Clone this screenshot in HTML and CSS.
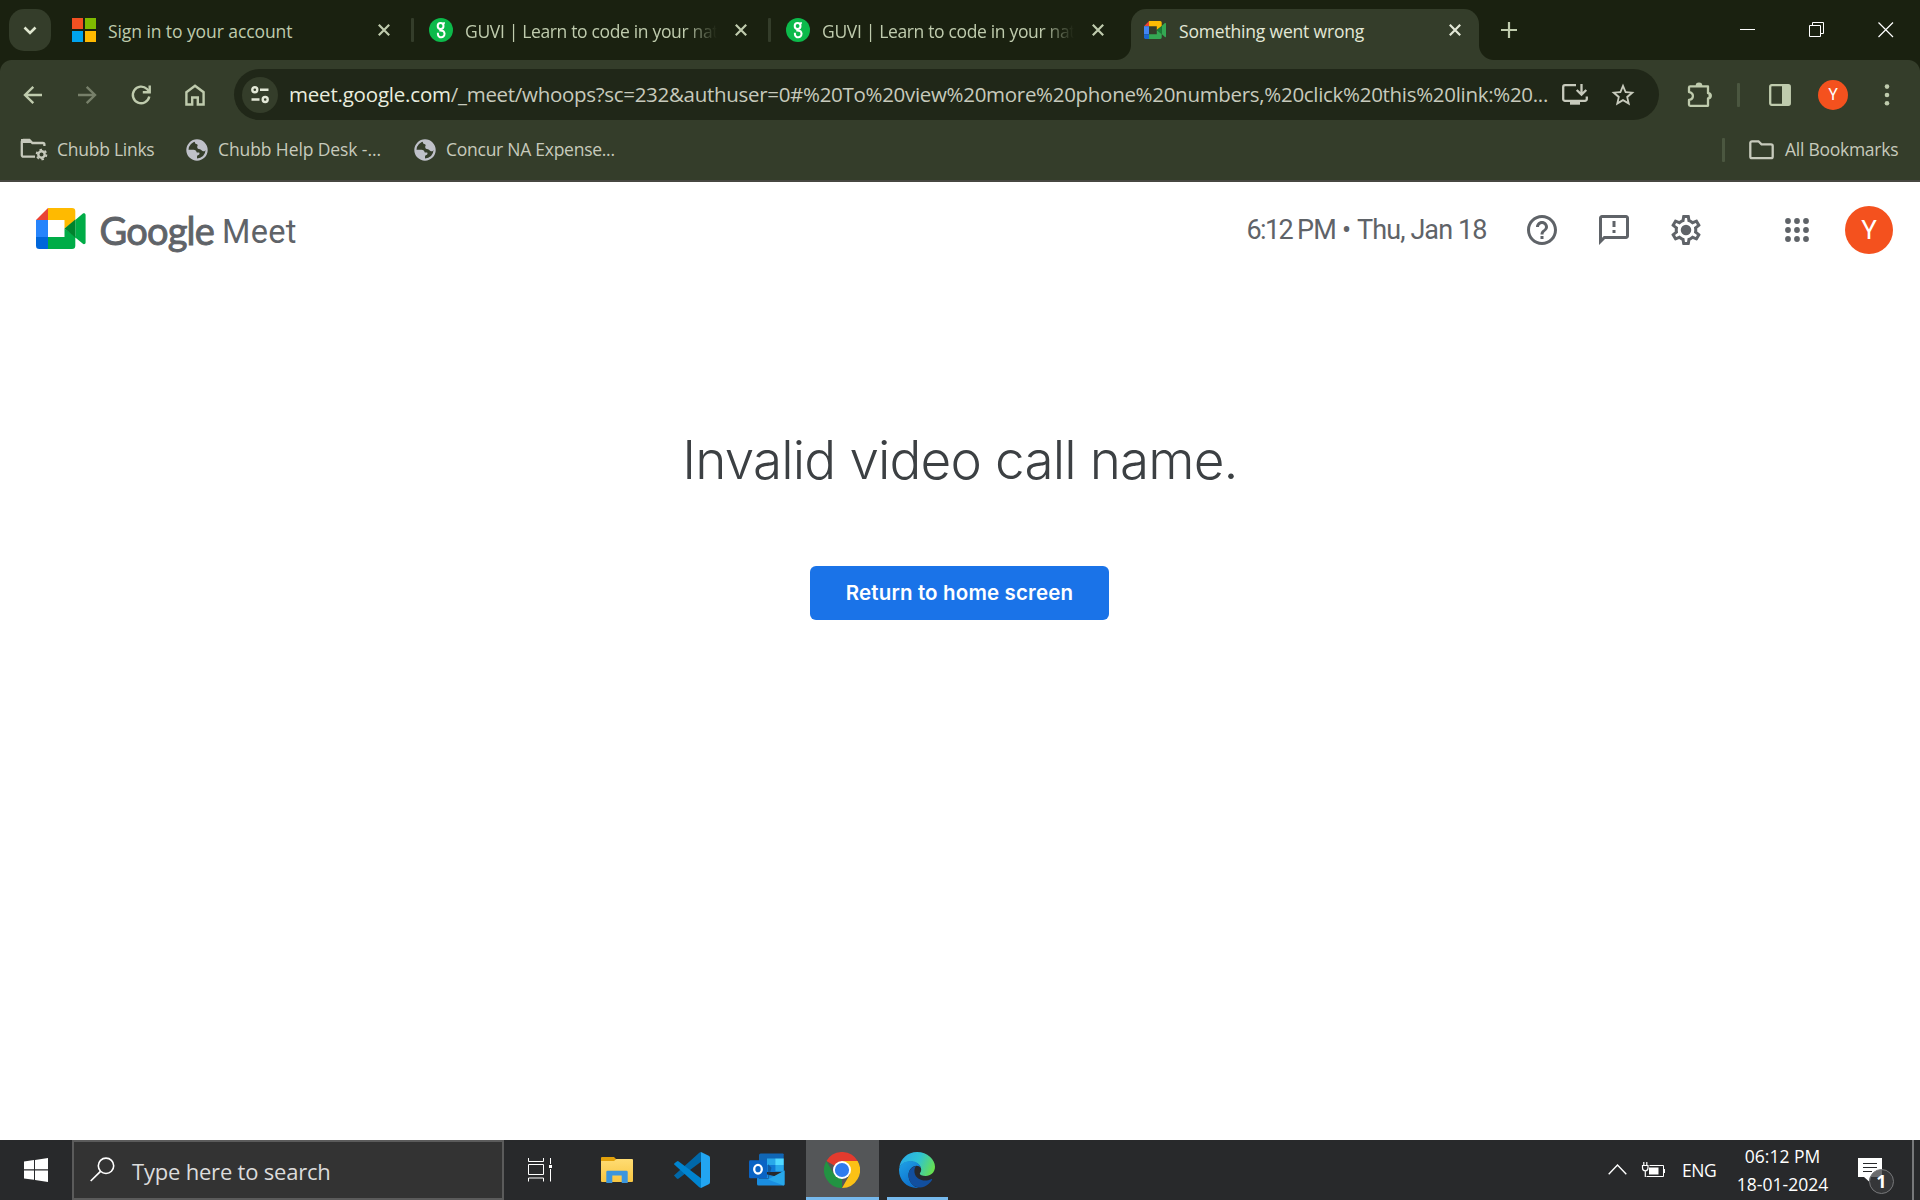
FILE: index.html
```html
<!DOCTYPE html>
<html lang="en">
<head>
<meta charset="utf-8">
<title>Something went wrong</title>
<link rel="stylesheet" href="styles.css">
</head>
<body>
<svg class="defs" width="0" height="0" aria-hidden="true">
  <symbol id="x" viewBox="0 0 12 12"><path d="M.8.8 11.2 11.2M11.2.8.8 11.2" fill="none" stroke="currentColor" stroke-width="2.2"/></symbol>
  <symbol id="guvi" viewBox="0 0 24 24"><circle cx="12" cy="12" r="12" fill="#0cba4b"/><g fill="none" stroke="#fff" stroke-width="2"><circle cx="11.600" cy="8" r="2.900"/><path d="M13.800 6.300c.3-.8.900-1.200 2-1.200M11.300 10.900v1.700c2.500 0 4.200 1.300 4.200 3.300a3.300 3.300 0 0 1-6.600.2v-1.300"/></g></symbol>
  <symbol id="globe" viewBox="0 0 22 22"><circle cx="11" cy="11" r="9.600" fill="none" stroke="currentColor" stroke-width="2.200"/><path fill="currentColor" d="M9.500 1.500c5-1 10.500 3 10.700 9-.6 1.400-1.900 2-3.200 1.700-1.500-.3-1.500-1.700-3-2-1.600-.3-2.800-.7-2.800-2.300 0-1 .8-1.400.3-2.200-.6-.8-2-.4-2.500-1.700-.3-1 0-1.800.5-2.500zM1.200 10.800h6.300c1.800 0 3 1.200 3.300 2.700h2.400c.7 1.200.2 2.200-.9 2.500-1 .3-1.300 1-1.300 2v2.500C5.500 20.600 1 16.500 1.200 10.800z"/></symbol>
</svg>

<header class="tabstrip">
  <button class="tab-search" aria-label="Search tabs"><svg width="14" height="9" viewBox="0 0 14 9"><path d="M1.500 1.500 7 7l5.500-5.500" fill="none" stroke="#dfe6cf" stroke-width="2.600"/></svg></button>
  <div class="tab">
    <svg class="fav" viewBox="0 0 24 24"><path fill="#f25022" d="M0 0h11v11H0z"/><path fill="#7fba00" d="M13 0h11v11H13z"/><path fill="#00a4ef" d="M0 13h11v11H0z"/><path fill="#ffb900" d="M13 13h11v11H13z"/></svg>
    <span class="tab-title"><span class="txt t-sign">Sign in to your account</span></span>
    <svg class="close"><use href="#x"/></svg>
  </div>
  <div class="tab">
    <svg class="fav"><use href="#guvi"/></svg>
    <span class="tab-title fade"><span class="txt t-guvi">GUVI | Learn to code in your nat</span></span>
    <svg class="close"><use href="#x"/></svg>
  </div>
  <div class="tab last">
    <svg class="fav"><use href="#guvi"/></svg>
    <span class="tab-title fade"><span class="txt t-guvi">GUVI | Learn to code in your nat</span></span>
    <svg class="close"><use href="#x"/></svg>
  </div>
  <div class="tab active">
    <svg class="fav" viewBox="0 0 24 24"><path fill="#ea4335" d="M1 8.200 6 3v5.200z"/><path fill="#fbbc04" d="M6 3h11.200A1.500 1.500 0 0 1 18.700 4.500V8l-4.900 4V8.200H6z"/><path fill="#4285f4" d="M1 8.200h5v8H1z"/><path fill="#1967d2" d="M1 16.200h5V21H2.400A1.400 1.400 0 0 1 1 19.600z"/><path fill="#34a853" d="M6 16.200h7.800V12l4.900 4v3.600a1.400 1.400 0 0 1-1.400 1.400H6zM18.700 8l3.200-2.900c.5-.4 1.100-.1 1.100.5v13c0 .5-.6.8-1.100.4L18.700 16z"/><path fill="#188038" d="m13.800 12 4.900-4v8z"/></svg>
    <span class="tab-title"><span class="txt t-wrong">Something went wrong</span></span>
    <svg class="close"><use href="#x"/></svg>
  </div>
  <svg class="newtab" width="16" height="16" viewBox="0 0 16 16"><path d="M8 0v16M0 8h16" stroke="#bfcbad" stroke-width="2.200"/></svg>
  <div class="winctl">
    <svg width="16" height="16"><path d="M0 7.500h15" stroke="#fff"/></svg>
    <svg width="16" height="16"><path d="M.5 3.500h11v11H.5zM3.500 3.500v-3h11v11h-3" fill="none" stroke="#fff"/></svg>
    <svg width="16" height="16"><path d="m.5.5 14.500 14.500M15 .5.5 15" stroke="#fff" stroke-width="1.200"/></svg>
  </div>
</header>

<div class="chrome">
<div class="toolbar">
  <svg class="nav" viewBox="0 0 24 24"><path d="M21 12H4.500M12.300 3.800 4 12l8.300 8.200"/></svg>
  <svg class="nav dim" viewBox="0 0 24 24"><path d="M3 12h16.500M11.700 3.800 20 12l-8.300 8.200"/></svg>
  <svg class="nav" viewBox="0 0 24 24"><path d="M20.300 13.500A8.300 8.300 0 1 1 18 6l2.500 2.600"/><path d="M20.700 2.500v6.800h-6.900"/></svg>
  <svg class="nav" viewBox="0 0 24 24"><path d="M3.400 9.200 12 2.700l8.600 6.500V21.500H14.800v-7H9.200v7H3.400z"/></svg>
  <div class="omnibox">
    <span class="tune"><svg width="20" height="18" viewBox="0 0 20 18" fill="none" stroke="#e3e8d7" stroke-width="2.400"><circle cx="4.800" cy="3.700" r="2.500"/><path d="M10 3.700h8.500M1.500 13.500h8"/><circle cx="15.200" cy="13.500" r="2.500"/></svg></span>
    <span class="url"><span class="txt u-host">meet.google.com</span><span class="txt u-path">/_meet/whoops?sc=232&amp;authuser=0#%20To%20view%20more%20phone%20numbers,%20click%20this%20link:%20...</span></span>
    <svg class="install" width="26" height="22" viewBox="0 0 26 22"><path d="M14 1.200H3A1.800 1.800 0 0 0 1.200 3v12A1.800 1.800 0 0 0 3 16.800h20a1.800 1.800 0 0 0 1.800-1.800v-2.500M19.500 0v9.500M14.700 6l4.800 4.600L24.300 6" fill="none" stroke="#c7cabc" stroke-width="2.300"/><path fill="#c7cabc" d="M8 16.500h10v4.200H8z"/></svg>
    <svg class="star" width="24" height="24" viewBox="0 0 24 24"><path fill="#c7cabc" d="m23.500 8.900-8.300-.7L12 .6 8.800 8.200.5 8.900l6.300 5.500-1.900 8.100L12 18.200l7.100 4.300-1.900-8.100zM12 15.900l-4.300 2.600 1.100-4.900-3.800-3.300 5-.4L12 5.300l2 4.600 5 .4-3.800 3.300 1.100 4.900z"/></svg>
  </div>
  <svg class="puzzle" width="26" height="26" viewBox="0 0 26 26"><path d="M3.200 4.400H21v6.800c3.700.1 3.700 5.200 0 5.300v7.300H3.200c-.7 0-1.200-.5-1.200-1.200v-4.700c5.200-.8 5.200-7 0-7.800V5.600c0-.7.5-1.200 1.200-1.200z" fill="none" stroke="#bfcbad" stroke-width="2.300" stroke-linejoin="round"/><path fill="#bfcbad" d="M8.600 4a3.400 3.400 0 0 1 6.800 0zM21.500 10.500a3.400 3.400 0 0 1 0 6.700z"/></svg>
  <i class="vsep"></i>
  <svg class="panel" width="22" height="22" viewBox="0 0 22 22"><rect x="1.200" y="1.200" width="19.600" height="19.600" rx="1.500" fill="none" stroke="#bfcbad" stroke-width="2.300"/><path fill="#bfcbad" d="M13 1h8v20h-8z"/></svg>
  <span class="me">Y</span>
  <svg class="dots" width="6" height="22" viewBox="0 0 6 22" fill="#bfcbad"><circle cx="3" cy="2.600" r="2.300"/><circle cx="3" cy="11" r="2.300"/><circle cx="3" cy="19.300" r="2.300"/></svg>
</div>
<nav class="bookmarks">
  <svg class="fgear" width="28" height="24" viewBox="0 0 28 24"><path d="M15 18.700H3.400A1.600 1.600 0 0 1 1.800 17V3.600A1.600 1.600 0 0 1 3.400 2h6l3 3h10.400a1.600 1.600 0 0 1 1.600 1.600V8" fill="none" stroke="#c7cabc" stroke-width="2.300"/><path fill="#c7cabc" d="M1 1h8.500L12 5H1z"/><circle cx="21.500" cy="16.500" r="3.200" fill="none" stroke="#c7cabc" stroke-width="2.400"/><circle cx="21.500" cy="16.500" r="4.900" fill="none" stroke="#c7cabc" stroke-width="1.800" stroke-dasharray="2.500 2.631"/></svg>
  <span class="txt b1">Chubb Links</span>
  <svg class="globe"><use href="#globe"/></svg>
  <span class="txt b2">Chubb Help Desk -...</span>
  <svg class="globe"><use href="#globe"/></svg>
  <span class="txt b3">Concur NA Expense...</span>
  <i class="vsep bsep"></i>
  <svg class="folder" width="25" height="20" viewBox="0 0 25 20"><path d="M3 1.300h6.500l3 3h9.500A1.700 1.700 0 0 1 23.700 6v10.500a1.700 1.700 0 0 1-1.700 1.700H3a1.700 1.700 0 0 1-1.700-1.700V3A1.700 1.700 0 0 1 3 1.300z" fill="none" stroke="#c7cabc" stroke-width="2.300"/></svg>
  <span class="txt b4">All Bookmarks</span>
</nav>
</div>

<main class="page">
  <div class="meetbar">
    <svg class="meetlogo" width="50" height="41" viewBox="0 0 50 41"><path fill="#ea4335" d="M0 12 12 0v12z"/><path fill="#ffba00" d="M12 0h24a3.300 3.300 0 0 1 3.300 3.300V12.500L28.500 20.500V12H12z"/><path fill="#2684fc" d="M0 12h12v17H0z"/><path fill="#0066da" d="M0 29h12v12H3.300A3.300 3.300 0 0 1 0 37.700z"/><path fill="#00ac47" d="M12 29h16.500v-8.500l10.800 8v9.200A3.300 3.300 0 0 1 36 41H12zM39.300 12l7.600-6.400c1.100-.9 2.700-.1 2.700 1.300v27.600c0 1.400-1.600 2.200-2.700 1.300l-7.600-6.300z"/><path fill="#00832d" d="m28.500 20.500 10.800-9v18z"/></svg>
    <span class="txt l-google">Google</span>
    <span class="txt l-meet">Meet</span>
    <span class="clock"><span class="txt c1">6:12</span><span class="txt c2">PM</span><span class="txt c3">•</span><span class="txt c4">Thu, Jan 18</span></span>
    <svg class="mi m1" viewBox="0 0 24 24"><path d="M11 18h2v-2h-2v2zm1-16C6.480 2 2 6.480 2 12s4.480 10 10 10 10-4.480 10-10S17.520 2 12 2zm0 18c-4.410 0-8-3.590-8-8s3.590-8 8-8 8 3.590 8 8-3.590 8-8 8zm0-14c-2.210 0-4 1.790-4 4h2c0-1.100.9-2 2-2s2 .9 2 2c0 2-3 1.750-3 5h2c0-2.250 3-2.500 3-5 0-2.210-1.790-4-4-4z"/></svg>
    <svg class="mi m2" viewBox="0 0 24 24"><path d="M20 2H4c-1.100 0-1.990.9-1.990 2L2 22l4-4h14c1.100 0 2-.9 2-2V4c0-1.100-.9-2-2-2zm0 14H5.170l-.59.59-.58.58V4h16v12zm-9-4h2v2h-2zm0-6h2v4h-2z"/></svg>
    <svg class="mi m2" viewBox="0 0 24 24"><path d="M19.430 12.980c.04-.32.07-.64.07-.98s-.03-.66-.07-.98l2.110-1.650c.19-.15.24-.42.12-.64l-2-3.460c-.09-.16-.26-.25-.44-.25-.06 0-.12.01-.17.03l-2.490 1c-.52-.4-1.080-.73-1.690-.98l-.38-2.650C14.460 2.180 14.250 2 14 2h-4c-.25 0-.46.18-.49.42l-.38 2.650c-.61.25-1.170.59-1.690.98l-2.490-1c-.06-.02-.12-.03-.18-.03-.17 0-.34.09-.43.25l-2 3.460c-.13.22-.07.49.12.64l2.110 1.650c-.04.32-.07.65-.07.98s.03.66.07.98l-2.110 1.650c-.19.15-.24.42-.12.64l2 3.460c.09.16.26.25.44.25.06 0 .12-.01.17-.03l2.490-1c.52.4 1.080.73 1.690.98l.38 2.650c.03.24.24.42.49.42h4c.25 0 .46-.18.49-.42l.38-2.650c.61-.25 1.170-.59 1.690-.98l2.490 1c.06.02.12.03.18.03.17 0 .34-.09.43-.25l2-3.460c.12-.22.07-.49-.12-.64l-2.110-1.650zm-1.980-1.710c.04.31.05.52.05.73 0 .21-.02.43-.05.73l-.14 1.130.89.7 1.080.84-.7 1.210-1.270-.51-1.040-.42-.9.68c-.43.32-.84.56-1.250.73l-1.060.43-.16 1.130-.2 1.350h-1.400l-.19-1.350-.16-1.130-1.060-.43c-.43-.18-.83-.41-1.230-.71l-.91-.7-1.060.43-1.270.51-.7-1.210 1.080-.84.89-.7-.14-1.130c-.03-.31-.05-.54-.05-.74s.02-.43.05-.73l.14-1.130-.89-.7-1.080-.84.7-1.210 1.270.51 1.040.42.9-.68c.43-.32.84-.56 1.250-.73l1.060-.43.16-1.130.2-1.350h1.390l.19 1.350.16 1.130 1.060.43c.43.18.83.41 1.230.71l.91.7 1.060-.43 1.270-.51.7 1.210-1.070.85-.89.7.14 1.130z"/><circle cx="12" cy="12" r="3.500"/></svg>
    <svg class="apps" width="24" height="24" viewBox="0 0 24 24"><path d="M3 3v.01M12 3v.01M21 3v.01M3 12v.01M12 12v.01M21 12v.01M3 21v.01M12 21v.01M21 21v.01" stroke="#5f6368" stroke-width="5.800" stroke-linecap="round"/></svg>
    <span class="account">Y</span>
  </div>
  <h1><span class="txt">Invalid video call name.</span></h1>
  <button class="home"><span class="txt">Return to home screen</span></button>
</main>

<footer class="taskbar">
  <div class="start"><svg width="24" height="24" viewBox="0 0 24 24"><path fill="#fff" d="M0 3.400 10 2v9.300H0zM11 1.900 24 0v11.300H11zM0 12.400h10v9.300L0 20.400zM11 12.400h13V24l-13-1.900z"/></svg></div>
  <div class="search"><svg width="25" height="25" viewBox="0 0 25 25"><circle cx="16" cy="8.800" r="7.700" fill="none" stroke="#fff" stroke-width="1.600"/><path d="M10.500 14.300.7 24" stroke="#fff" stroke-width="1.700"/></svg><span class="txt s">Type here to search</span></div>
  <div class="cell"><svg width="24" height="24" viewBox="0 0 24 24"><path d="M.5 0v3.500h15V0M.5 6.500h15v10H.5zM.5 23.500V20h15v3.500M22.500 0v6M22.500 11v12.500" fill="none" stroke="#fff"/><path fill="#fff" d="M21 7h3v3h-3z"/></svg></div>
  <div class="cell second"><svg width="32" height="28" viewBox="0 0 32 28"><defs><linearGradient id="fo" x2="0" y2="1"><stop stop-color="#ffdc73"/><stop offset="1" stop-color="#f8c641"/></linearGradient></defs><path fill="#e2a10b" d="M1 1h12l2.500 2.500V8H0V2a1 1 0 0 1 1-1z"/><path fill="url(#fo)" d="M0 5h13l2.500-2H31a1 1 0 0 1 1 1v21a1 1 0 0 1-1 1H1a1 1 0 0 1-1-1z"/><path fill="#3a95dd" d="M5.300 27V16a1.300 1.300 0 0 1 1.300-1.300h18.800a1.300 1.300 0 0 1 1.300 1.300v11h-6v-7.500h-9.400V27z"/></svg></div>
  <div class="cell"><svg width="36" height="36" viewBox="0 0 36 36"><path fill="#0068a9" d="m0 23.500 2.800 3a1.500 1.500 0 0 0 1.900.1L27 9.800V.4a2.300 2.300 0 0 0-2 .6L.5 23a1 1 0 0 0-.5.500z"/><path fill="#0084d0" d="m.5 12.800L25 35a2.300 2.300 0 0 0 2 .6v-9.400L4.700 9.400a1.500 1.500 0 0 0-1.900.1L.5 11.300a1 1 0 0 0 0 1.500z"/><path fill="#22a5f1" d="M26.500 0a2 2 0 0 1 1 .2L34.700 3.700A2.300 2.300 0 0 1 36 5.800v24.400a2.300 2.300 0 0 1-1.300 2.100l-7.200 3.500a2 2 0 0 1-1 .2c.3-.3.500-.7.500-1.200V1.200c0-.5-.2-.9-.5-1.200z"/></svg></div>
  <div class="cell"><svg width="36" height="34" viewBox="0 0 36 34"><path fill="#1066b5" d="M10 2.200A1.700 1.700 0 0 1 11.700.5h22A1 1 0 0 1 34.700 2v17H10z"/><path fill="#28a8ea" d="M18 5.500h8.200v6.500H18zM26.200 12h8.500v6.500h-8.500z"/><path fill="#50d9ff" d="M26.200 5.500h8.500V12h-8.500z"/><path fill="#0f78d4" d="M18 12h8.200v7H18z"/><path fill="#1a8de0" d="M8 19l19 4.500 8.500-6v13.500a1.500 1.500 0 0 1-1.500 1.500H9.500A1.500 1.500 0 0 1 8 31z"/><path fill="#28a8ea" d="M35.500 17.500v14a1.500 1.500 0 0 1-1 1L19 26.500z"/><path fill="#123b6d" opacity=".5" d="M10 25h9V11l3.500 3.800L19.500 26H10z"/><rect y="7.200" width="18" height="18" rx="1.300" fill="#0a63c4"/><ellipse cx="9" cy="16.200" rx="3.800" ry="4.300" fill="none" stroke="#fff" stroke-width="2.300"/></svg></div>
  <div class="cell on"><svg width="36" height="36" viewBox="0 0 36 36"><path fill="#e33b2e" d="M18 18 2.400 9A18 18 0 0 1 33.600 9z"/><path fill="#229342" d="M18 18v18A18 18 0 0 1 2.400 9l7.800 13.500z"/><path fill="#fbc116" d="M18 9h15.600A18 18 0 0 1 18 36l7.800-13.500z"/><circle cx="18" cy="18" r="9" fill="#fff"/><circle cx="18" cy="18" r="7.100" fill="#2f7bee"/></svg></div>
  <div class="cell run"><svg width="36" height="36" viewBox="0 0 36 36"><defs><linearGradient id="e1" x1="0" x2="1" y1=".3" y2=".6"><stop stop-color="#28a9e8"/><stop offset=".5" stop-color="#2fc3d3"/><stop offset="1" stop-color="#68e04e"/></linearGradient><linearGradient id="e2" x2=".6" y2="1"><stop stop-color="#1fa2e6"/><stop offset="1" stop-color="#0c6dcb"/></linearGradient></defs><path fill="url(#e1)" d="M.3 15.500C1.400 6.500 8.800 0 18 0c10.500 0 18 7.500 18 14.800 0 5.700-4.500 9.200-9.200 9.200-3.800 0-6-1.200-6-2.300 0-.9 1.400-1.500 1.400-4.200 0-4-4.500-8-10.700-8C6 9.500 2 12.500.3 15.500z"/><path fill="url(#e2)" d="M0 18C0 13 5 9 11.500 9c5.500 0 10 3.500 10.600 7.300-1.200-1.800-3-2.500-4.600-2.500-4 0-8 4-8 9.500C9.500 29.500 14 35 20 35.900 9 37 0 29 0 18z"/><path fill="#124f9f" d="M17 14c-5 1-7.500 5-7.500 9.300 0 7.200 6 12.700 12 12.200 5-.5 9-3.500 11.500-7.500.4-.7-.2-1.200-.9-.8-6.600 3.300-15.600.3-16.600-6.700-.4-2.800.4-5.200 1.500-6.500z"/></svg></div>
  <div class="tray">
    <svg class="chev" width="19" height="11" viewBox="0 0 19 11"><path d="M.7 10.200 9.500 1l8.800 9.200" fill="none" stroke="#fff" stroke-width="1.400"/></svg>
    <svg class="bat" width="25" height="18" viewBox="0 0 25 18"><path d="M8.500 4.500h14v11H5.500M23.500 8v4" fill="none" stroke="#fff"/><path fill="#fff" d="M8 6.500h9.500v7H8z"/><path d="M1.500 4.500h5.500v2.500a2.700 2.700 0 0 1-5.500 0zM2.800 4V1M5.800 4V1M4.300 10v6" fill="none" stroke="#fff" stroke-width="1.200"/></svg>
    <span class="txt eng">ENG</span>
    <span class="dt"><span class="txt">06:12 PM</span><span class="txt">18-01-2024</span></span>
    <svg class="note" width="37" height="37" viewBox="0 0 37 37"><path fill="#fff" d="M0 0h24v19H12l-1 4.500L6 19H0z"/><path d="M5 5.500h14M5 9.500h14M5 13.500h9" stroke="#28292b"/><circle cx="23.500" cy="23.500" r="12" fill="#3a3b3d" fill-opacity=".75" stroke="#77787a"/><text x="23.500" y="30" text-anchor="middle" class="badge">1</text></svg>
    <i class="peek"></i>
  </div>
</footer>
</body>
</html>
```
FILE: styles.css
```css
* { box-sizing: border-box; }
body { margin: 0; width: 1920px; height: 1200px; overflow: hidden; display: flex; flex-direction: column; background: #fff; font-family: "Open Sans", "Noto Sans", sans-serif; }
svg { display: block; flex: none; }
.defs { position: absolute; }
.txt { white-space: nowrap; }
button { border: 0; padding: 0; font: inherit; }

/* tab strip */
.tabstrip { height: 60px; background: #1a2110; display: flex; flex: none; align-items: center; padding-left: 9px; }
.tab-search { width: 42px; height: 42px; border-radius: 15px; background: #343d2a; margin-right: 6px; display: grid; place-items: center; flex: none; }
.tab { position: relative; width: 357px; height: 60px; flex: none; display: flex; align-items: center; padding-left: 15px; color: #bfcbad; }
.tab::after { content: ""; width: 3px; height: 24px; margin-left: 21px; border-radius: 1px; background: #343d2a; }
.tab.last::after { visibility: hidden; }
.tab.active { color: #e3e8d7; isolation: isolate; }
.tab.active::before { content: ""; position: absolute; z-index: -1; left: 3px; width: 348px; top: 9px; bottom: 0; background: #343d2a; border-radius: 15px 15px 0 0; }
/* flared feet on both sides of the active tab */
.tab.active::after { position: absolute; z-index: -1; left: -12px; bottom: 0; width: 378px; height: 15px; margin: 0; border-radius: 0;
  background: radial-gradient(circle at 0 0, transparent 14.500px, #343d2a 15.500px) left / 15px 15px no-repeat,
              radial-gradient(circle at 100% 0, transparent 14.500px, #343d2a 15.500px) right / 15px 15px no-repeat; }
.fav { width: 24px; height: 24px; margin-right: 12px; }
.tab-title { width: 252px; overflow: hidden; font-size: 17.500px; line-height: 26px; padding-top: 2px; }
.t-sign { letter-spacing: -.08px; }
.t-guvi { letter-spacing: -.34px; }
.t-wrong { letter-spacing: -.18px; }
.fade { -webkit-mask-image: linear-gradient(to right, #000 87%, transparent 100%); mask-image: linear-gradient(to right, #000 87%, transparent 100%); }
.close { width: 12px; height: 12px; margin-left: 18px; }
.newtab { margin-left: 16px; }
.winctl { margin-left: auto; display: flex; gap: 53px; padding: 0 26px 1px 0; }

/* toolbar */
.chrome { background: radial-gradient(circle at 12px 12px, #343d2a 11.500px, #1a2110 12.500px) 0 0 / 12px 12px no-repeat, radial-gradient(circle at 0 12px, #343d2a 11.500px, #1a2110 12.500px) 100% 0 / 12px 12px no-repeat, #343d2a; height: 122px; flex: none; border-bottom: 2px solid #474741; }
.toolbar { height: 69px; display: flex; align-items: center; padding-left: 21px; }
.nav { width: 24px; height: 24px; margin-right: 30px; fill: none; stroke: #bfcbad; stroke-width: 2.400; }
.nav.dim { stroke: #77806a; }
.omnibox { width: 1425px; height: 51px; margin-left: -3px; border-radius: 26px; background: #202718; display: flex; align-items: center; padding-left: 8px; flex: none; }
.tune { width: 36px; height: 36px; border-radius: 50%; background: #343d2a; display: grid; place-items: center; }
.url { width: 1273px; margin: -2px 0 0 11px; font-size: 20.500px; line-height: 30px; color: #c7cabc; white-space: nowrap; }
.u-host { color: #e9eddf; letter-spacing: -.2px; }
.u-path { letter-spacing: -.3px; }
.star { margin-left: 23px; }
.puzzle { margin-left: 28px; }
.vsep { width: 3px; height: 24px; background: #4b5740; border-radius: 1px; flex: none; }
.puzzle + .vsep { margin-left: 24px; }
.panel { margin-left: 29px; }
.me { width: 30px; height: 30px; border-radius: 50%; background: #f4511e; color: #fff; margin-left: 27px; font: 16px/30px Roboto, sans-serif; text-align: center; }
.dots { margin-left: 36px; }
.bookmarks { height: 51px; display: flex; align-items: center; padding: 0 0 9px 20px; font-size: 17.500px; line-height: 24px; color: #c7cabc; }
.bookmarks .txt { margin-top: -2px; letter-spacing: -.26px; }
.fgear { margin-right: 9px; }
.globe { width: 22px; height: 22px; color: #bfc1c9; margin-right: 10px; }
.b1 { width: 129px; }
.bookmarks .b2 { width: 196px; letter-spacing: -.1px; }
.bsep { margin-left: auto; }
.folder { margin: 0 11px 0 24px; }
.b4 { width: 135px; }

/* page */
.page { flex: 1; display: flex; flex-direction: column; align-items: center; color: #3c4043; font-family: Roboto, sans-serif; }
.meetbar { width: 100%; height: 96px; display: flex; align-items: center; padding-left: 35.500px; color: #5f6368; }
.meetlogo { margin-top: -3px; }
.l-google { font: 400 38px/44px Lato, sans-serif; -webkit-text-stroke: .9px #5f6368; letter-spacing: -.8px; margin: -1px 0 0 14px; width: 122.500px; }
.l-meet { font-size: 32.500px; line-height: 40px; letter-spacing: .3px; margin-top: 4px; }
.clock { margin-left: auto; display: flex; font-size: 27px; line-height: 36px; letter-spacing: -.9px; }
.c1 { width: 50.500px; letter-spacing: -1.600px; }
.c2 { width: 45px; }
.c3 { width: 15px; }
.c4 { width: 130px; }
.mi { width: 36px; height: 36px; fill: #5f6368; }
.m1 { margin-left: 37px; }
.m2 { margin-left: 36px; }
.apps { margin-left: 81px; }
.account { width: 48px; height: 48px; border-radius: 50%; background: #f4511e; color: #fff; font: 26px/48px Roboto, sans-serif; text-align: center; margin: 0 27px 0 36px; }
h1 { margin: 146px 0 0; font-family: Inter, sans-serif; font-size: 53px; font-weight: 350; line-height: 72px; letter-spacing: -.85px; }
.home { margin-top: 70px; margin-right: 1px; width: 299px; height: 54px; border-radius: 6px; background: #1a73e8; color: #fff; font: 600 20.500px/30px Inter, sans-serif; letter-spacing: .15px; padding-bottom: 1px; }

/* taskbar */
.taskbar { height: 60px; flex: none; background: #28292b; display: flex; color: #fff; }
.start { width: 72px; display: grid; place-items: center; }
.search { width: 432px; border: 2px solid #5b5b5b; background: #333; display: flex; align-items: center; padding-left: 16px; color: #dcdcdc; font-size: 22px; letter-spacing: -.2px; }
.search svg { margin-top: -1px; }
.search .txt { margin: 2px 0 0 17px; }
.cell { width: 73px; margin-right: 2px; padding-right: 1px; display: grid; place-items: center; }
.second { margin-left: 2px; }
.on { background: #545658; box-shadow: inset 0 -3px #76b9ed; }
.run { background: linear-gradient(#76b9ed, #76b9ed) center bottom / 61px 3px no-repeat; }
.tray { margin-left: auto; display: flex; align-items: center; font-size: 17.500px; }
.chev { margin-top: -1px; }
.bat { margin: -1px 0 0 14px; }
.eng { margin-left: 16px; width: 55px; letter-spacing: -.4px; }
.dt { display: flex; flex-direction: column; align-items: center; line-height: 28px; width: 91px; }
.note { margin: 13px 0 0 30px; }
.badge { font: 700 18px "Open Sans", sans-serif; fill: #fff; }
.peek { width: 2px; height: 60px; background: #77787a; margin: 0 6px 0 17px; }
```
